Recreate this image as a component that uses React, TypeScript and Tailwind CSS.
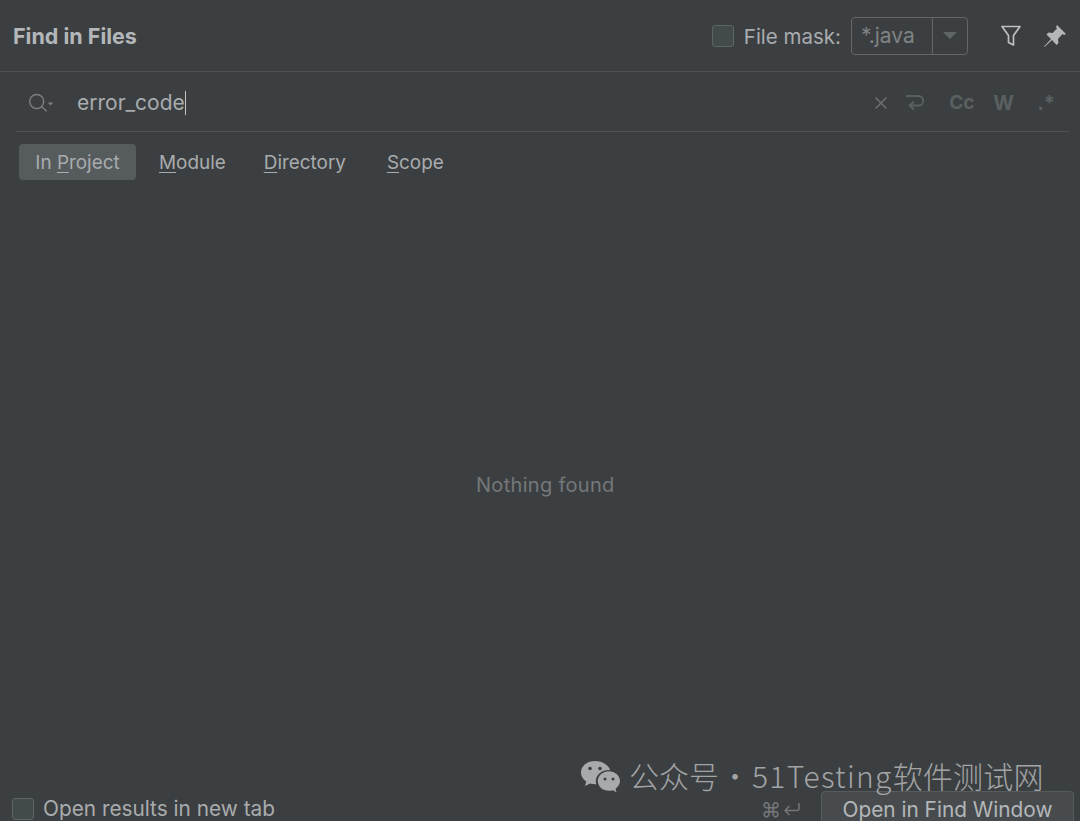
import React from 'react';

const Underlined = ({ first, rest }: { first: string; rest: string }) => (
  <span>
    <span className="underline underline-offset-[3px] decoration-1">{first}</span>
    {rest}
  </span>
);

const Checkbox = () => (
  <span className="block w-[22px] h-[22px] rounded-[3px] border border-[#5c6466] bg-[#424a4a] shrink-0" />
);

const App: React.FC = () => {
  return (
    <div className="relative h-[821px] w-[1080px] overflow-hidden bg-[#3c3f41] text-[#a9acae] font-['Inter','Liberation_Sans',sans-serif]">
      {/* Header */}
      <div className="flex items-center h-[72px] border-b border-[#4e5254] pl-[13px] pr-[13px]">
        <h1 className="mt-[2px] text-[21.5px] font-bold text-[#b4b7b9]">Find in Files</h1>
        <div className="ml-auto flex items-center">
          <Checkbox />
          <span className="ml-[10px] pt-[3px] text-[20.5px] text-[#a9acae]">File mask:</span>
          <div className="ml-[10px] flex items-stretch h-[38px] w-[117px] rounded-[4px] border border-[#63676a]">
            <span className="flex items-center w-[81px] pl-[9px] text-[21px] text-[#7f8385] border-r border-[#63676a]">*.java</span>
            <span className="flex flex-1 items-center justify-center">
              <svg width="14" height="8" viewBox="0 0 14 8"><path d="M0 0h14L7 7z" fill="#5f6466" /></svg>
            </span>
          </div>
          <svg className="ml-[32px]" width="22" height="24" viewBox="0 0 22 24" fill="none" stroke="#bcbfc1" strokeWidth="1.7" strokeLinejoin="round">
            <path d="M2 2.500h18l-6.500 9v9.500l-5-2.500v-7z" />
          </svg>
          <svg className="ml-[21px]" width="24" height="24" viewBox="0 0 24 24" fill="#b4b7b9">
            <path d="M14 1l9 9-2 1-1.500-1-4.500 5 .5 4-2 2-4.500-5-7.500 7-.5-.5 7-7.500-4.500-4.500 2-2 4 .5 4.500-4.500-1-1.500z" />
          </svg>
        </div>
      </div>

      {/* Search row */}
      <div className="ml-[16px] mr-[11px] flex items-center h-[60px] border-b border-[#4e5254] pl-[13px] pr-[14px]">
        <svg width="25" height="22" viewBox="0 0 25 22" fill="none" stroke="#7d8183" strokeWidth="1.4">
          <circle cx="7.700" cy="10.500" r="7" />
          <path d="M13 16l4.700 4.200" />
          <path d="M18.700 11.500h5.600l-2.800 3z" fill="#7d8183" stroke="none" />
        </svg>
        <div className="ml-[23px] flex items-center pt-[3px] text-[21px] text-[#a9acae]">
          error_code
          <span className="inline-block w-px h-[24px] bg-[#c4c7c9]" />
        </div>
        <div className="ml-auto flex items-center pt-[3px] text-[#5a6062]">
          <svg width="14" height="14" viewBox="0 0 14 14" stroke="#6c7072" strokeWidth="1.500">
            <path d="M1.500 1.500l11 11M12.500 1.500l-11 11" />
          </svg>
          <svg className="ml-[17px]" width="20" height="18" viewBox="0 0 20 18" fill="none" stroke="#5a6062" strokeWidth="1.800">
            <path d="M1 2h12.500a4.500 4.500 0 0 1 0 9.500H5" />
            <path d="M9 7.500l-4.500 4 4.500 4" />
          </svg>
          <span className="ml-[24px] text-[19px] font-bold">Cc</span>
          <span className="ml-[19px] text-[20px] font-bold">W</span>
          <span className="ml-[23px] text-[20px] font-bold">.*</span>
        </div>
      </div>

      {/* Scope tabs */}
      <div className="flex items-center mt-[12px] ml-[19px] text-[18.9px]">
        <span className="flex items-center justify-center w-[117px] h-[36px] pt-[2px] rounded-[4px] bg-[#565b5e] text-[#a9acae]">
          <span>In <Underlined first="P" rest="roject" /></span>
        </span>
        <span className="ml-[23px] pt-[2px]"><Underlined first="M" rest="odule" /></span>
        <span className="ml-[38px] pt-[2px]"><Underlined first="D" rest="irectory" /></span>
        <span className="ml-[41px] pt-[2px]"><Underlined first="S" rest="cope" /></span>
      </div>

      {/* Empty state */}
      <div className="absolute left-[476px] top-[470px] text-[20px] tracking-[0.3px] text-[#74787a]">Nothing found</div>

      {/* Footer */}
      <div className="absolute left-0 right-0 top-[791px] flex items-start pl-[12px] pr-[6px]">
        <div className="mt-[7px] flex items-center">
          <Checkbox />
          <span className="ml-[9px] text-[20.8px] leading-[22px] text-[#a9acae]">Open results in new tab</span>
        </div>
        <div className="ml-auto flex items-start">
          <span className="mt-[4px] flex items-center gap-[2px] text-[#74787a] text-[20px]">
            ⌘
            <svg width="18" height="16" viewBox="0 0 18 16" fill="none" stroke="#74787a" strokeWidth="1.500">
              <path d="M16 1v5.500a2 2 0 0 1-2 2H2M6.500 4L2 8.500 6.500 13" />
            </svg>
          </span>
          <button className="ml-[20px] h-[38px] w-[253px] rounded-[4px] border border-[#565b5e] bg-[#474b4e] text-[20.8px] leading-[22px] text-[#b4b7b9]">
            Open in Find Window
          </button>
        </div>
      </div>

      {/* Watermark */}
      <div className="absolute left-[580px] top-[755px] flex items-center text-[#a2a4a5] font-['Noto_Sans_CJK_SC',sans-serif] font-light text-[30px] whitespace-nowrap">
        <svg width="41" height="34" viewBox="0 0 41 34" fill="#a8a9aa">
          <path d="M15 1C7 1 1 6 1 12.500c0 3.800 2 6.800 5.200 9L5 26l5-2.500c1.700.4 3.300.7 5 .7h1.300a10 10 0 0 1-.5-3.200C15.800 14.800 21.800 10 29 10h1.200C28.500 5 22.400 1 15 1z" />
          <path d="M40 21c0-5.500-5.300-9.800-11-9.800-6.200 0-11.200 4.300-11.200 9.800s5 9.800 11.200 9.800c1.300 0 2.600-.2 3.800-.6l3.700 2-1-3.500c2.700-2 4.500-4.700 4.500-7.700z" />
          <circle cx="10" cy="8.500" r="1.800" fill="#3c3f41" />
          <circle cx="20" cy="8.500" r="1.800" fill="#3c3f41" />
          <circle cx="25" cy="19" r="1.500" fill="#3c3f41" />
          <circle cx="33" cy="19" r="1.500" fill="#3c3f41" />
        </svg>
        <span className="ml-[8px] -mt-[2px]">公众号</span>
        <span className="ml-[1px] mr-[2px] -mt-[2px]">·</span>
        <span className="-mt-[2px] tracking-[1.3px]">51Testing</span>
        <span className="-mt-[2px] tracking-[0.2px]">软件测试网</span>
      </div>
    </div>
  );
};

export default App;
